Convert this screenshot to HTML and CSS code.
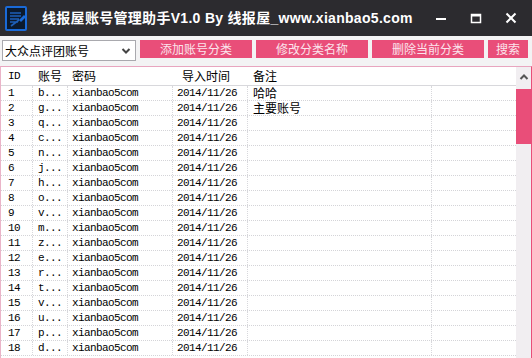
FILE: index.html
```html
<!DOCTYPE html>
<html>
<head>
<meta charset="utf-8">
<link rel="stylesheet" href="styles.css">
</head>
<body>
<div class="win">
  <div class="titlebar">
    <svg class="appicon" width="24" height="26" viewBox="0 0 24 26">
      <rect x="1" y="1" width="20" height="23" rx="1" fill="#0b1a2e" stroke="#1a6ad8" stroke-width="2"/>
      <path d="M5 7h11M5 10h11M5 13h9M5 16h8M6 20l8-6" stroke="#1e5fb8" stroke-width="1.6" fill="none"/>
      <path d="M14 14l5-5 2 2-5 5z" fill="#1a6ad8"/>
    </svg>
    <div class="title">线报屋账号管理助手V1.0 By 线报屋_www.xianbao5.com</div>
    <div class="controls">
      <svg class="ctl" width="14" height="14" viewBox="0 0 14 14"><path d="M2 8h10" stroke="#fff" stroke-width="2"/></svg>
      <svg class="ctl" width="14" height="14" viewBox="0 0 14 14"><rect x="2.5" y="3.5" width="9" height="8" fill="none" stroke="#fff" stroke-width="1.5"/><path d="M2.5 4.5h9" stroke="#fff" stroke-width="2"/></svg>
      <svg class="ctl" width="14" height="14" viewBox="0 0 14 14"><path d="M2.5 2.5l9 9M11.5 2.5l-9 9" stroke="#fff" stroke-width="2"/></svg>
    </div>
  </div>
  <div class="toolbar">
    <div class="select">
      <span>大众点评团账号</span>
      <svg class="chev" width="10" height="8" viewBox="0 0 10 8"><path d="M1.5 2l3.5 3.5L8.5 2" stroke="#444" stroke-width="2" fill="none"/></svg>
    </div>
    <div class="btn wide">添加账号分类</div>
    <div class="btn wide">修改分类名称</div>
    <div class="btn wide">删除当前分类</div>
    <div class="btn small">搜索</div>
  </div>
  <div class="list">
    <div class="grid">
      <div class="row head">
        <div class="c c1">ID</div><div class="c c2">账号</div><div class="c c3">密码</div><div class="c c4 hd">导入时间</div><div class="c c5">备注</div><div class="c c6"></div>
      </div>
      <div class="rows" id="rows"></div>
    </div>
    <div class="scroll">
      <div class="up"><svg width="10" height="8" viewBox="0 0 10 8"><path d="M1.5 6l3.5-3.5L8.5 6" stroke="#555" stroke-width="2" fill="none"/></svg></div>
      <div class="thumb"></div>
    </div>
  </div>
</div>
<script src="app.js"></script>
</body>
</html>
```
FILE: app.js
```js
var letters = ['b','g','q','c','n','j','h','o','v','m','z','e','r','t','v','u','p','d'];
var notes = {0:'哈哈',1:'主要账号'};
var html = '';
for (var i = 0; i < letters.length; i++) {
  html += '<div class="row">' +
    '<div class="c c1 m">' + (i + 1) + '</div>' +
    '<div class="c c2 m">' + letters[i] + '...</div>' +
    '<div class="c c3 m">xianbao5com</div>' +
    '<div class="c c4 m">2014/11/26</div>' +
    '<div class="c c5">' + (notes[i] || '') + '</div>' +
    '<div class="c c6"></div></div>';
}
document.getElementById('rows').innerHTML = html;
```
FILE: styles.css
```css
html, body { margin: 0; padding: 0; }
body { width: 532px; height: 358px; overflow: hidden; background: #fff;
  font-family: "Noto Sans CJK SC", "Liberation Sans", sans-serif; font-size: 12px; }
.win { width: 532px; height: 358px; display: flex; flex-direction: column; }
.titlebar { height: 36px; background: #2c2b2f; display: flex; align-items: center; flex: none; }
.appicon { margin: 1px 0 0 5px; }
.title { color: #fff; font-weight: bold; font-size: 14px; margin-left: 13px; letter-spacing: 0.3px;
  font-family: "Liberation Sans", "Noto Sans CJK SC", sans-serif; line-height: 20px; white-space: nowrap; }
.controls { margin-left: auto; display: flex; gap: 21px; margin-right: 14px; }
.toolbar { height: 30px; background: #f3f3f4; display: flex; align-items: flex-start; padding: 4px 0 0 2px; box-sizing: border-box; flex: none; gap: 4px; }
.select { width: 134px; border: 1px solid #a9a9ae; background: #fff; display: flex; align-items: center; box-sizing: border-box; height: 21px; }
.select span { padding-left: 2px; font-size: 12px; line-height: 19px; color: #000; }
.chev { margin-left: auto; margin-right: 4px; }
.btn { height: 18px; background: #e94e79; color: #fbe4ec; font-size: 12px; line-height: 18px; text-align: center; }
.btn.wide { width: 112px; }
.btn.small { width: 40px; }
.list { flex: 1; display: flex; border-top: 1px solid #e8a5bf; border-left: 1px solid #eab4c8; border-right: 1px solid #e94e79; overflow: hidden; }
.grid { flex: 1; background: #fff; }
.row { display: flex; height: 15px; line-height: 15px; }
.row.head { height: 19px; line-height: 18px; border-bottom: 1px solid #d8d8dc; box-sizing: border-box; }
.rows .row { border-bottom: 1px dotted #d4d4d8; box-sizing: border-box; }
.c { box-sizing: border-box; white-space: nowrap; color: #000; border-right: 1px dotted #d8d8dc; }
.c1 { width: 32px; padding-left: 7px; }
.c2 { width: 35px; padding-left: 5px; }
.c3 { width: 105px; padding-left: 4px; }
.c4 { width: 75px; padding-left: 4px; }
.c4.hd { padding-left: 9px; }
.c5 { width: 184px; padding-left: 5px; line-height: 14px; }
.c6 { flex: 1; border-right: none; }
.head .c { border-right: none; line-height: 18px; }
.head .c1 { font-family: "Liberation Mono", monospace; font-size: 11px; letter-spacing: -0.6px; }
.m { font-family: "Liberation Mono", monospace; font-size: 11px; letter-spacing: -0.6px; }
.scroll { width: 15px; background: #f1eef1; flex: none; display: flex; flex-direction: column; }
.up { height: 19px; display: flex; align-items: center; justify-content: center; }
.thumb { height: 55px; background: #e94e79; margin-top: 3px; }
```
